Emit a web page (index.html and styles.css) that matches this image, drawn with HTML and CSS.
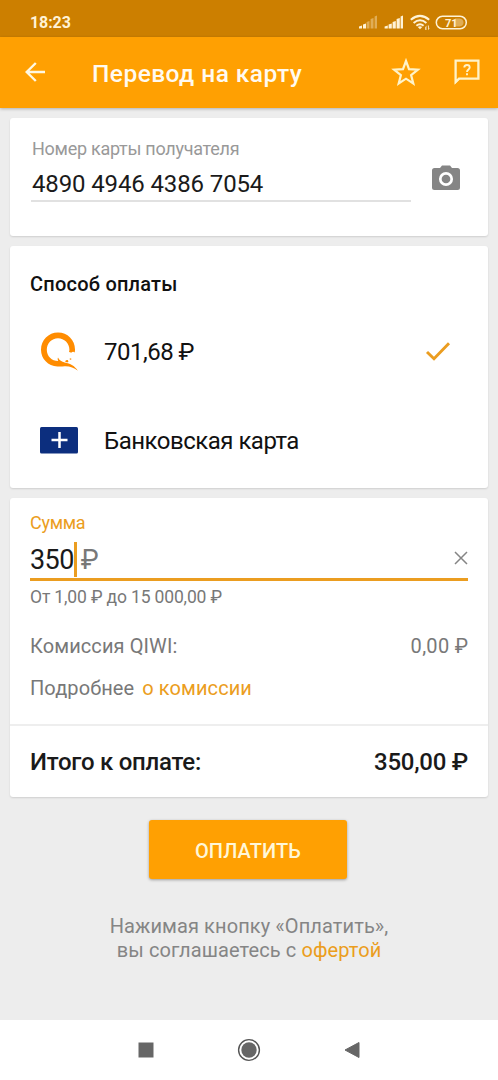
FILE: index.html
```html
<!DOCTYPE html>
<html lang="ru">
<head>
<meta charset="utf-8">
<title>Перевод на карту</title>
<link rel="stylesheet" href="styles.css">
</head>
<body>
<div class="status">
  <span class="time">18:23</span>
  <svg class="status-icons" width="112" height="18" viewBox="0 0 112 18" fill="#fff3d6">
    <path d="M1 14.500v-2l3-1v3zM5 14.500v-4l3-1v5z"/>
    <path opacity=".4" d="M8.600 14.500V8l2.900-1v7.500zM12.600 14.500V5l2.900-1v10.500zM16.600 14.500V2.500l2.400-1v13z"/>
    <path d="M26.600 14.500v-2l3.200-1v3zM30.600 14.500v-4l3.200-1v5zM34.600 14.500V8l3.200-1v7.500zM38.600 14.500V5l3.200-1v10.500zM42.600 14.500V2.500l2.400-1v13z"/>
    <g fill="none" stroke="#fff3d6" stroke-width="2"><path d="M52.800 5.800Q62-2 71.200 5.800M55.600 8.900Q62 3.500 68.400 8.900M58.400 11.800Q62 8.800 65.600 11.800"/></g>
    <path d="M59.800 13Q62 11.500 64.200 13L62 15.300z"/>
    <path d="M67.200 13.500l1.200-2v4.500h-1zM69.800 11.500h1v2.800l1-.5-1.500 2.500z"/>
    <rect x="78.300" y="2.300" width="30" height="12.400" rx="6.200" fill="none" stroke="#fff3d6" stroke-width="1.500"/>
    <path opacity=".4" d="M97 4.500h4.500q4 .5 4 4t-4 4H97z"/>
    <text x="93.300" y="12.600" text-anchor="middle" class="battery">71</text>
  </svg>
</div>
<header class="bar">
  <svg class="back" width="20" height="20" viewBox="0 0 20 20" fill="none" stroke="#fff8e3" stroke-width="2.400"><path d="M20 10H2M10.800 1L1.700 10l9.100 9"/></svg>
  <h1 class="title">Перевод на карту</h1>
  <svg class="star" width="30" height="30" viewBox="0 0 30 30" fill="none" stroke="#fff3c9" stroke-width="2.200"><path d="M15 4l3 8.100 8.900.6-6.800 5.400 2.200 8.400-7.300-4.800-7.300 4.800 2.200-8.400-6.800-5.400 8.900-.6z"/></svg>
  <svg class="help" width="26" height="26" viewBox="0 0 26 26" fill="none" stroke="#fff3c9"><path stroke-width="2.300" d="M1.600 23V1.600h22.800v18H5z"/><path d="M1 20v5l5-5z" fill="#fff3c9" stroke="none"/><path stroke-width="1.900" d="M10.300 8.600q0-2.600 2.700-2.600t2.700 2.400c0 2-2.700 2.100-2.700 4.600M13 14.200v2"/></svg>
</header>
<main>
  <section class="card recipient">
    <div class="field">
      <div class="label">Номер карты получателя</div>
      <div class="number">4890 4946 4386 7054</div>
    </div>
    <svg class="camera" width="28" height="26" viewBox="0 0 28 26"><path fill="#858585" d="M2.500 3H8l2-2.500h8L20 3h5.500Q28 3 28 5.500v17q0 2.500-2.500 2.500h-23Q0 25 0 22.500v-17Q0 3 2.500 3z"/><circle cx="14" cy="14" r="5.700" fill="none" stroke="#fff" stroke-width="2.700"/></svg>
  </section>
  <section class="card methods">
    <h2 class="heading">Способ оплаты</h2>
    <div class="method">
      <svg class="method-icon" width="38" height="40" viewBox="0 0 38 40">
        <path fill="#ff8c00" fill-rule="evenodd" d="M18 .5C27.500.5 35 8 35 17.500c0 1-.1 2-.3 2.900-1.200-.9-2.700-.6-3.500.3-.8-.4-1.500-.7-2.200-.8.300-.7.400-1.500.4-2.300C29.400 11.200 24.300 6.200 18 6.200S6.800 11.200 6.800 17.700 11.800 29 18.200 29c-.6-1.300-.7-2.500-.2-3.400 1.400 2.900 3.800 4.400 6.700 4.900 5.600.8 10.300 3.700 13.100 8.200-4-3.200-8-4.700-13.100-4.500-2 .3-5 .6-7.200.3C8 33.800 1 27 1 17.700 1 8 8.500.5 18 .5z"/>
        <path fill="#ff8c00" d="M25 29.500q1-1.600 2.700-1.400l.8 1.300-1.300 1.100zM29.500 26.800l1.600-.5.300 1.200-1.400.3z"/>
      </svg>
      <span class="method-name">701,68 ₽</span>
      <svg class="check" width="26" height="22" viewBox="0 0 26 22" fill="none" stroke="#eb9d20" stroke-width="2.900"><path d="M2 11l7 6.800L24 2.200"/></svg>
    </div>
    <div class="method">
      <svg class="method-icon" width="38" height="27" viewBox="0 0 38 27"><rect width="38" height="26.500" rx="1.500" fill="#0c2e7e"/><path d="M11.500 13h16M19.500 5v16" stroke="#fff" stroke-width="2.500"/></svg>
      <span class="method-name bank">Банковская карта</span>
    </div>
  </section>
  <section class="card payment">
    <div class="details">
      <div class="sum-label">Сумма</div>
      <div class="amount"><span class="value">350</span><i class="caret"></i><span class="currency">₽</span>
        <svg class="clear" width="14" height="14" viewBox="0 0 14 14" stroke="#858585" stroke-width="1.500"><path d="M1 1l12 12M13 1L1 13"/></svg>
      </div>
      <div class="hint">От 1,00 ₽ до 15 000,00 ₽</div>
      <div class="fee"><span class="fee-name">Комиссия QIWI:</span><span class="fee-value">0,00 ₽</span></div>
      <div class="more"><span class="more-text">Подробнее</span><a class="link more-link">о комиссии</a></div>
    </div>
    <div class="total"><span class="total-name">Итого к оплате:</span><span class="total-value">350,00 ₽</span></div>
  </section>
  <button class="pay">ОПЛАТИТЬ</button>
  <p class="terms"><span class="terms-first">Нажимая кнопку «Оплатить»,</span><br>вы соглашаетесь с <a class="link">офертой</a></p>
</main>
<nav class="nav">
  <svg width="16" height="16" viewBox="0 0 16 16"><path fill="#666" d="M.500.500h15v15h-15z"/></svg>
  <svg width="24" height="24" viewBox="0 0 24 24"><circle cx="12" cy="12" r="10.400" fill="none" stroke="#555" stroke-width="1.400"/><circle cx="12" cy="12" r="7.700" fill="#666"/></svg>
  <svg width="16" height="18" viewBox="0 0 16 18"><path fill="#666" d="M15 1.500v15L1 9z" stroke="#666" stroke-linejoin="round"/></svg>
</nav>
</body>
</html>
```
FILE: styles.css
```css
* { box-sizing: border-box; }
body {
  margin: 0;
  height: 1080px;
  display: flex;
  flex-direction: column;
  background: #ededed;
  color: #1a1a1a;
  font-family: Roboto, "Noto Sans", sans-serif;
  white-space: nowrap;
}
h1, h2, p { margin: 0; font-weight: 500; }
svg { display: block; flex: none; }
.status {
  height: 37px;
  background: #cc7f00;
  display: flex;
  justify-content: space-between;
  padding: 0 28px 0 30px;
}
.time { color: #fff3d6; font-size: 16px; font-weight: 700; line-height: 46px; letter-spacing: -.1px; }
.status-icons { margin-top: 14px; }
.battery { font-size: 11px; font-weight: 700; }
.bar {
  height: 71px;
  background: #ffa002;
  display: flex;
  align-items: center;
  padding: 0 18px 2px 25px;
  box-shadow: 0 1px 3px rgba(0, 0, 0, .25);
}
.back { margin-right: 47px; }
.title { color: #fffaf0; font-size: 24.5px; line-height: 30px; padding-top: 5px; letter-spacing: .45px; }
.star { margin-left: auto; margin-right: 33px; }
main { flex: 1; padding: 10px 10px 0; display: flex; flex-direction: column; }
.card {
  background: #fff;
  border-radius: 3px;
  box-shadow: 0 1px 2px rgba(0, 0, 0, .13);
  margin-bottom: 10px;
}
.recipient { height: 118px; padding: 18px 28px 0 21px; display: flex; justify-content: space-between; }
.field { width: 380px; height: 66px; border-bottom: 2px solid #e1e1e1; }
.label { padding-left: 1px; color: #999; font-size: 18px; line-height: 24px; padding-top: 1px; letter-spacing: -.27px; }
.number { padding-left: 1px; font-size: 24px; line-height: 30px; margin-top: 8px; letter-spacing: -.13px; }
.camera { margin-top: 29px; }
.methods { height: 242px; padding: 26px 37px 0 20px; }
.heading { color: #111; font-size: 20px; line-height: 24px; margin-bottom: 11px; letter-spacing: .22px; }
.method { height: 89px; display: flex; align-items: center; padding-left: 10px; }
.method-name { margin-left: 26px; font-size: 24px; color: #111; letter-spacing: -.5px; }
.check { margin-left: auto; }
.payment { height: 299px; margin-bottom: 23px; }
.details { height: 228px; padding: 13px 20px 0; border-bottom: 2px solid #eee; color: #787878; }
.sum-label { color: #eb9d20; font-size: 18px; line-height: 24px; letter-spacing: -.3px; }
.amount { height: 46px; padding-top: 6px; display: flex; align-items: center; border-bottom: 3px solid #eb9d20; font-size: 27px; }
.value { color: #1a1a1a; letter-spacing: -.6px; }
.caret { width: 3px; height: 35px; background: #eb9d20; }
.currency { margin-left: 4px; }
.clear { margin-left: auto; margin-bottom: 3px; }
.hint { margin-top: 4px; font-size: 17.5px; line-height: 24px; letter-spacing: -.15px; }
.fee { margin-top: 25px; display: flex; justify-content: space-between; font-size: 20px; line-height: 24px; letter-spacing: .1px; }
.fee-value { letter-spacing: .3px; margin-right: -.3px; }
.more { margin-top: 18px; display: flex; gap: 8px; font-size: 20px; line-height: 24px; letter-spacing: .1px; }
.link { color: #eb9d20; }
.total { height: 71px; padding: 0 20px; display: flex; justify-content: space-between; align-items: center; font-size: 24px; font-weight: 500; letter-spacing: -.25px; }
.pay {
  width: 198px;
  height: 59px;
  align-self: center;
  margin-right: 2px;
  border: 0;
  border-radius: 3px;
  background: #ffa002;
  box-shadow: 0 1px 3px rgba(0, 0, 0, .35);
  color: #fff7d8;
  font: 500 20px Roboto, sans-serif;
  letter-spacing: .1px;
  padding: 2px 0 0;
}
.terms { margin-top: 35px; text-align: center; font-size: 20px; font-weight: 400; line-height: 24px; letter-spacing: .1px; color: #858585; }
.nav { height: 60px; background: #fff; display: flex; align-items: center; justify-content: center; gap: 83px; }
```
